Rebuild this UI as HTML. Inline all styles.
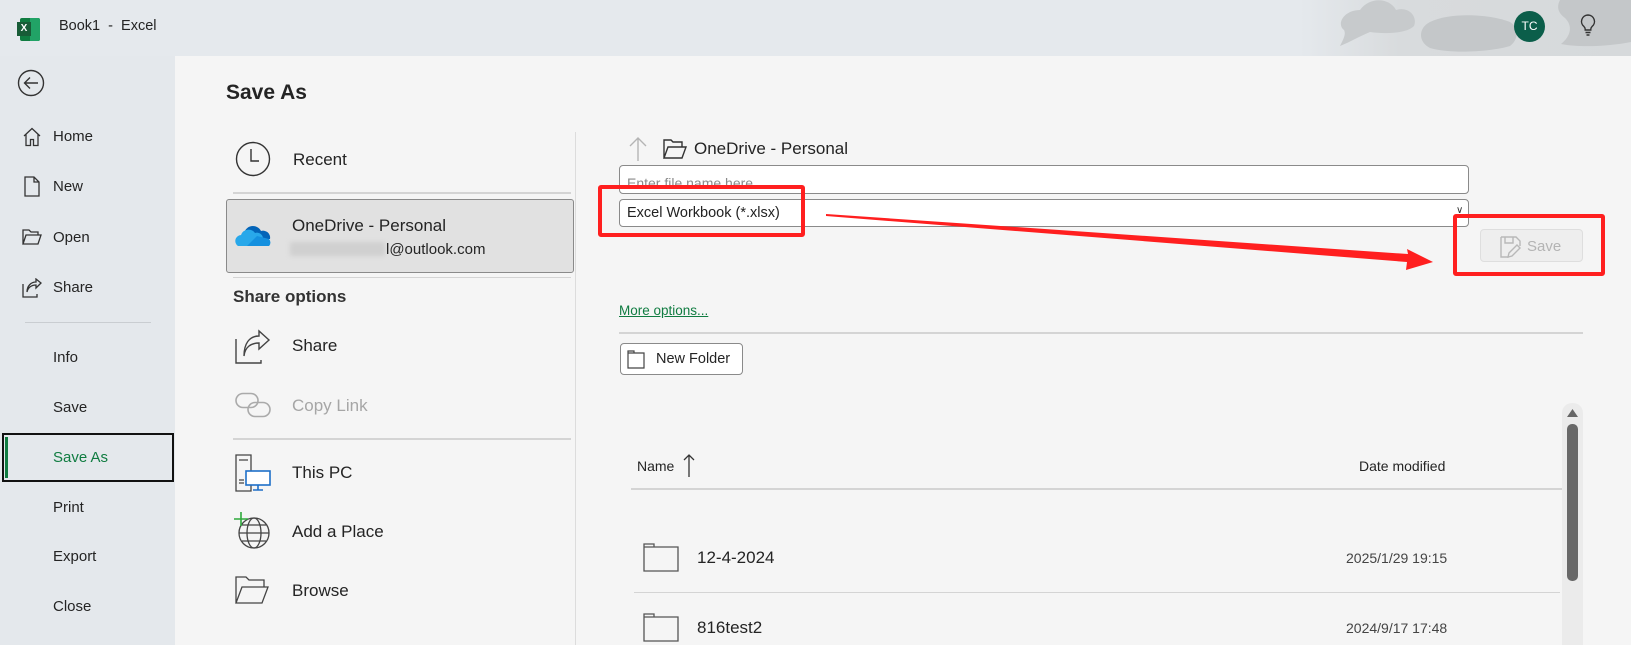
<!DOCTYPE html>
<html><head><meta charset="utf-8"><style>
*{margin:0;padding:0;box-sizing:border-box}
body{width:1631px;height:645px;overflow:hidden;background:#f5f5f5;font-family:"Liberation Sans",sans-serif;color:#242424;position:relative}
.a{position:absolute;white-space:nowrap}
.nav{font-size:15px;color:#242424}
.mid{font-size:17px}
.sep{position:absolute;background:#d4d4d4}
</style></head><body>
<!-- title bar -->
<div class="a" style="left:0;top:0;width:1631px;height:56px;background:#e5e9ed"></div>
<div class="a" style="left:1300px;top:0;width:331px;height:56px;background:linear-gradient(90deg,#e5e9ed,#d8dbdd 30%,#d6d9db)"></div>
<svg class="a" style="left:1320px;top:0" width="311" height="56" viewBox="0 0 311 56">
<path d="M40 10c10-14 30-12 36 0c12-4 22 6 18 16c-8 8-30 8-44 6c-10 4-20 10-30 14c4-8 6-12 4-16c-8-6 0-20 16-20z" fill="#c7cacc"/>
<path d="M110 22c20-10 60-8 80 0c10 6 8 18 0 24c-20 6-60 8-80 2c-12-6-12-20 0-26z" fill="#c4c7c9"/>
<path d="M240 0h71v42c-20 4-50 6-70 2c10-8 12-18 4-26c-8-6-8-12-5-18z" fill="#c4c7c9"/>
</svg>
<div class="a" style="left:20px;top:18px;width:20px;height:23px;background:#107c41;border-radius:2px"></div>
<div class="a" style="left:30px;top:18px;width:10px;height:23px;background:#21a366;border-radius:0 2px 2px 0"></div>
<div class="a" style="left:17px;top:22px;width:14px;height:14px;background:#185c37;color:#fff;font-size:10px;font-weight:bold;text-align:center;line-height:14px">X</div>
<div class="a" style="left:59px;top:18px;font-size:14.5px">Book1 &nbsp;- &nbsp;Excel</div>
<div class="a" style="left:1514px;top:11px;width:31px;height:31px;border-radius:50%;background:#0b5e4a;color:#fff;font-size:12px;text-align:center;line-height:31px">TC</div>
<svg class="a" style="left:1579px;top:13px" width="18" height="24" viewBox="0 0 18 24" fill="none" stroke="#333" stroke-width="1.4"><path d="M9 2a6.5 6.5 0 0 0-4 11.6c.8.7 1.2 1.6 1.2 2.6V17h5.6v-.8c0-1 .4-1.9 1.2-2.6A6.5 6.5 0 0 0 9 2z"/><path d="M6.5 19.5h5M7.5 22h3"/></svg>

<!-- left nav -->
<div class="a" style="left:0;top:56px;width:175px;height:589px;background:#e4e8ec"></div>
<svg class="a" style="left:17px;top:69px" width="28" height="28" viewBox="0 0 28 28" fill="none" stroke="#333" stroke-width="1.4"><circle cx="14" cy="14" r="12.5"/><path d="M21 14H8M13 8.5L7.5 14l5.5 5.5"/></svg>
<svg class="a" style="left:22px;top:127px" width="20" height="20" viewBox="0 0 20 20" fill="none" stroke="#333" stroke-width="1.3"><path d="M2 9L10 1.5 18 9M4 7.5V18.5h4.5v-6h3v6H16V7.5"/></svg>
<div class="a nav" style="left:53px;top:128px">Home</div>
<svg class="a" style="left:24px;top:176px" width="16" height="21" viewBox="0 0 16 21" fill="none" stroke="#333" stroke-width="1.3"><path d="M1 1h9l5 5v14H1z M10 1v5h5"/></svg>
<div class="a nav" style="left:53px;top:178px">New</div>
<svg class="a" style="left:22px;top:229px" width="20" height="16" viewBox="0 0 20 16" fill="none" stroke="#333" stroke-width="1.3"><path d="M1 15V1h6l2 2h7v3 M1 15l3-9h15l-3 9z"/></svg>
<div class="a nav" style="left:53px;top:229px">Open</div>
<svg class="a" style="left:22px;top:278px" width="20" height="20" viewBox="0 0 20 20" fill="none" stroke="#333" stroke-width="1.3"><path d="M1 6v13h14v-3 M5 14c1-5 5-7 9-7V10l5-5-5-4v3c-5 0-9 4-9 10z"/></svg>
<div class="a nav" style="left:53px;top:279px">Share</div>
<div class="sep" style="left:25px;top:322px;width:126px;height:1px;background:#c9cdd1"></div>
<div class="a nav" style="left:53px;top:349px">Info</div>
<div class="a nav" style="left:53px;top:399px">Save</div>
<div class="a" style="left:2px;top:433px;width:172px;height:49px;border:2px solid #111"></div>
<div class="a" style="left:5px;top:437px;width:3px;height:41px;background:#107c41"></div>
<div class="a nav" style="left:53px;top:449px;color:#107c41">Save As</div>
<div class="a nav" style="left:53px;top:499px">Print</div>
<div class="a nav" style="left:53px;top:548px">Export</div>
<div class="a nav" style="left:53px;top:598px">Close</div>

<!-- main -->
<div class="a" style="left:226px;top:81px;font-size:21px;font-weight:bold">Save As</div>
<div class="sep" style="left:575px;top:132px;width:1px;height:513px;background:#dcdcdc"></div>
<svg class="a" style="left:235px;top:141px" width="36" height="36" viewBox="0 0 36 36" fill="none" stroke="#333" stroke-width="1.4"><circle cx="18" cy="18" r="16.5"/><path d="M16 8v12h8"/></svg>
<div class="a mid" style="left:293px;top:150px">Recent</div>
<div class="sep" style="left:233px;top:192px;width:338px;height:2px"></div>
<div class="a" style="left:226px;top:199px;width:348px;height:74px;background:#e1e1e1;border:1px solid #8a8a8a;border-radius:3px"></div>
<svg class="a" style="left:235px;top:222px" width="37" height="26" viewBox="0 0 37 26"><path d="M9 12a9 9 0 0 1 17-3a7 7 0 0 1 9 8H9z" fill="#0364b8"/><path d="M3 24a6 6 0 0 1 3-11a8 8 0 0 1 14-2a6 6 0 0 1 8 6a5 5 0 0 1 6 7z" fill="#28a8ea"/><path d="M12 24l10-10 12 3a5 5 0 0 1 0 7z" fill="#1490df"/></svg>
<div class="a mid" style="left:292px;top:216px">OneDrive - Personal</div>
<div class="a" style="left:290px;top:242px;width:95px;height:14px;background:#d0d0d0;filter:blur(2px)"></div>
<div class="a" style="left:386px;top:241px;font-size:15px">l@outlook.com</div>
<div class="sep" style="left:233px;top:277px;width:338px;height:1px"></div>
<div class="a" style="left:233px;top:287px;font-size:17px;font-weight:bold;color:#333">Share options</div>
<svg class="a" style="left:235px;top:329px" width="36" height="36" viewBox="0 0 36 36" fill="none" stroke="#444" stroke-width="1.4"><path d="M1 10v24h25v-3 M9 27c1-9 7-13 15-13v6l10-9-10-9v5c-10 0-15 8-15 20z"/></svg>
<div class="a mid" style="left:292px;top:336px">Share</div>
<svg class="a" style="left:235px;top:392px" width="36" height="26" viewBox="0 0 36 26" fill="none" stroke="#aaa" stroke-width="1.6"><rect x="1" y="1.5" width="22" height="14" rx="7"/><rect x="13" y="10.5" width="22" height="14" rx="7"/></svg>
<div class="a mid" style="left:292px;top:396px;color:#a6a6a6">Copy Link</div>
<div class="sep" style="left:233px;top:438px;width:338px;height:2px"></div>
<svg class="a" style="left:235px;top:454px" width="38" height="38" viewBox="0 0 38 38" fill="none" stroke-width="1.3"><path d="M1 1h15v36H1z M4 26h5M4 29h5M4 6h9" stroke="#444"/><rect x="11" y="17" width="24" height="14" fill="#fff" stroke="#1e6fc8" stroke-width="1.6"/><path d="M23 31v5M18 36h10" stroke="#1e6fc8" stroke-width="1.6"/></svg>
<div class="a mid" style="left:292px;top:463px">This PC</div>
<svg class="a" style="left:233px;top:511px" width="40" height="40" viewBox="0 0 40 40" fill="none" stroke="#444" stroke-width="1.3"><circle cx="21" cy="22" r="15"/><ellipse cx="21" cy="22" rx="7" ry="15"/><path d="M6 22h30M9 14h24M9 30h24"/><path d="M8 1v14M1 8h14" stroke="#2eaa3c" stroke-width="1.6"/></svg>
<div class="a mid" style="left:292px;top:522px">Add a Place</div>
<svg class="a" style="left:235px;top:576px" width="34" height="28" viewBox="0 0 34 28" fill="none" stroke="#444" stroke-width="1.3"><path d="M1 27V1h10l3 3h15v7 M1 27l6-16h26l-6 16z"/></svg>
<div class="a mid" style="left:292px;top:581px">Browse</div>

<!-- right -->
<svg class="a" style="left:628px;top:136px" width="20" height="26" viewBox="0 0 20 26" fill="none" stroke="#b4b4b4" stroke-width="1.4"><path d="M10 25V2M2 10l8-8 8 8"/></svg>
<svg class="a" style="left:663px;top:139px" width="24" height="20" viewBox="0 0 24 20" fill="none" stroke="#333" stroke-width="1.4"><path d="M1 19V1h7l2 2h9v5 M1 19l4-11h18l-4 11z"/></svg>
<div class="a" style="left:694px;top:139px;font-size:17px">OneDrive - Personal</div>
<div class="a" style="left:619px;top:165px;width:850px;height:29px;background:#fff;border:1px solid #8a8a8a;border-radius:4px;overflow:hidden"><div class="a" style="left:7px;top:9px;font-size:14px;color:#8a8a8a">Enter file name here</div></div>
<div class="a" style="left:619px;top:199px;width:850px;height:28px;background:#fff;border:1px solid #8a8a8a;border-radius:4px"><div class="a" style="left:7px;top:5px;font-size:14.5px;color:#222">Excel Workbook (*.xlsx)</div><div class="a" style="left:836px;top:5px;font-size:10px;color:#333">&#x2228;</div></div>
<div class="a" style="left:598px;top:185px;width:207px;height:52px;border:4px solid #ff1f1f;border-radius:3px"></div>
<svg class="a" style="left:0;top:0" width="1631" height="645"><polygon points="826,214 1408,254 1407,249 1433,262 1406,270 1407,262 826,216" fill="#ff1f1f"/></svg>
<div class="a" style="left:1480px;top:229px;width:103px;height:33px;background:#eeeeee;border:1px solid #dedede;border-radius:4px"></div>
<svg class="a" style="left:1500px;top:236px" width="22" height="22" viewBox="0 0 22 22" fill="none" stroke="#b8b8b8" stroke-width="1.4"><path d="M1 1h15l4 4v5 M1 1v20h8 M5 1v6h8V1 M12 20l8-8-3-3-8 8-1 4z"/></svg>
<div class="a" style="left:1527px;top:238px;font-size:15px;color:#b4b4b4">Save</div>
<div class="a" style="left:1453px;top:214px;width:152px;height:62px;border:4px solid #ff1f1f;border-radius:3px"></div>
<div class="a" style="left:619px;top:303px;font-size:13.5px;color:#107c41;text-decoration:underline">More options...</div>
<div class="sep" style="left:619px;top:332px;width:964px;height:2px"></div>
<div class="a" style="left:620px;top:343px;width:123px;height:32px;background:#fff;border:1px solid #8a8a8a;border-radius:4px"></div>
<svg class="a" style="left:627px;top:350px" width="18" height="19" viewBox="0 0 18 19" fill="none" stroke="#444" stroke-width="1.2"><path d="M1 1h6v2h10v15H1z M1 3h6"/></svg>
<div class="a" style="left:656px;top:351px;font-size:14.5px">New Folder</div>
<div class="a" style="left:637px;top:458px;font-size:14px">Name</div>
<svg class="a" style="left:683px;top:454px" width="12" height="24" viewBox="0 0 12 24" fill="none" stroke="#333" stroke-width="1.3"><path d="M6 23V1M1 6l5-5 5 5"/></svg>
<div class="a" style="left:1359px;top:458px;font-size:14px">Date modified</div>
<div class="sep" style="left:631px;top:488px;width:931px;height:2px"></div>
<svg class="a" style="left:643px;top:543px" width="36" height="29" viewBox="0 0 36 29" fill="none" stroke="#555" stroke-width="1.3"><path d="M1 1h10v3h24v24H1z M1 4h10"/></svg>
<div class="a" style="left:697px;top:548px;font-size:17px">12-4-2024</div>
<div class="a" style="left:1346px;top:550px;font-size:14px;color:#444">2025/1/29 19:15</div>
<div class="sep" style="left:634px;top:592px;width:926px;height:1px"></div>
<svg class="a" style="left:643px;top:613px" width="36" height="29" viewBox="0 0 36 29" fill="none" stroke="#555" stroke-width="1.3"><path d="M1 1h10v3h24v24H1z M1 4h10"/></svg>
<div class="a" style="left:697px;top:618px;font-size:17px">816test2</div>
<div class="a" style="left:1346px;top:620px;font-size:14px;color:#444">2024/9/17 17:48</div>
<div class="a" style="left:1562px;top:403px;width:21px;height:242px;background:#ebebeb;border-radius:10px 10px 0 0"></div>
<svg class="a" style="left:1566px;top:408px" width="13" height="10" viewBox="0 0 13 10"><path d="M6.5 1L12 9H1z" fill="#666"/></svg>
<div class="a" style="left:1567px;top:424px;width:11px;height:157px;background:#686868;border-radius:5px"></div>
</body></html>
